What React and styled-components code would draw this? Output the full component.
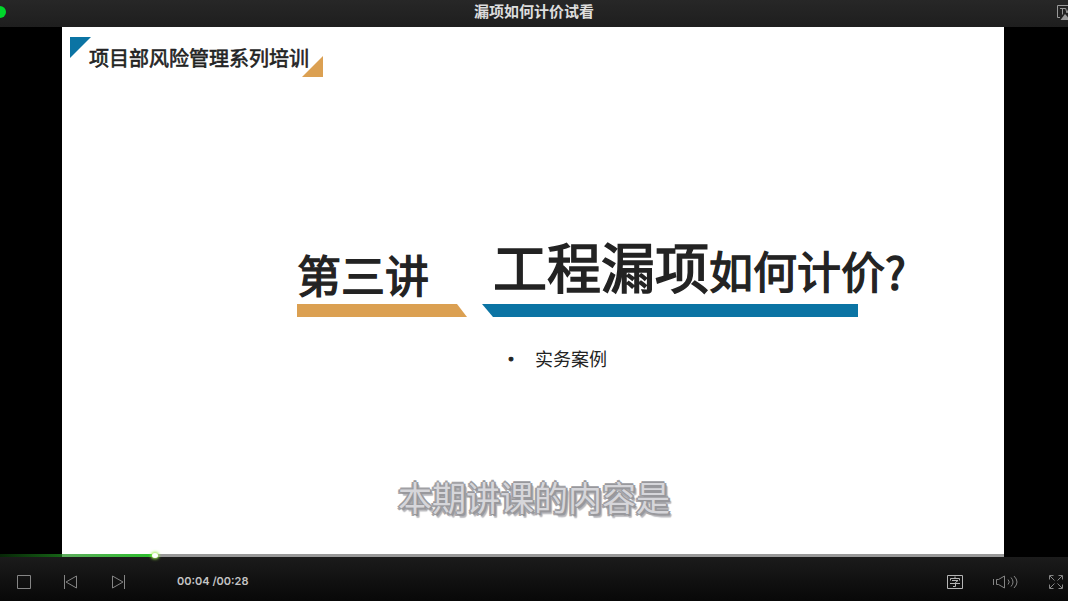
import { useState } from "react";
import styled, { createGlobalStyle } from "styled-components";

const DURATION = 28;

const formatTime = (s) => `00:${String(s).padStart(2, "0")}`;

const App = () => {
  const [time, setTime] = useState(4);

  return (
    <Player>
      <GlobalStyle />
      <TitleBar>
        <WindowDot aria-label="最大化" />
        <h1>漏项如何计价试看</h1>
        <AirPlayButton aria-label="投屏">
          <svg width="18" height="16" viewBox="0 0 18 16">
            <path d="M4 13.5H1.5V1.5h15v12H14" fill="none" stroke="#999" />
            <path d="M4 4.5h5M6.500 4.500v6M9.500 4l1.500 5 2-5" fill="none" stroke="#999" />
            <path d="M9 10 14.500 16h-10z" fill="#999" />
          </svg>
        </AirPlayButton>
      </TitleBar>
      <Stage>
        <Slide>
          <Series>
            <Corner $color="#0b74a4" $shape="0 0, 100% 0, 0 100%" />
            <span>项目部风险管理系列培训</span>
            <Corner $color="#dba052" $shape="100% 0, 100% 100%, 0 100%" $end />
          </Series>
          <Heading>
            <Part $color="#dba052" $bar="0 0, calc(100% - 10px) 0, 100% 100%, 0 100%">
              <Small>第三讲</Small>
            </Part>
            <Part $color="#0b74a4" $bar="0 0, 100% 0, 100% 100%, 11px 100%" $raised>
              <Large>工程漏项</Large>
              <Small>如何计价?</Small>
            </Part>
          </Heading>
          <Topics>
            <li>实务案例</li>
          </Topics>
        </Slide>
        <Caption>本期讲课的内容是</Caption>
        <Seek
          type="range"
          aria-label="播放进度"
          min="0"
          max={DURATION}
          value={time}
          onChange={(e) => setTime(Number(e.target.value))}
          style={{ "--played": `${(time / DURATION) * 100}%` }}
        />
      </Stage>
      <Controls>
        <Group $gap="31px">
          <IconButton aria-label="停止">
            <svg width="16" height="16" viewBox="0 0 16 16">
              <path d="M1.500 1.500h13v13h-13z" />
            </svg>
          </IconButton>
          <IconButton aria-label="上一个">
            <svg width="16" height="16" viewBox="0 0 16 16">
              <path d="M1.500 1v14M13.500 2v12L3 8z" />
            </svg>
          </IconButton>
          <IconButton aria-label="下一个">
            <svg width="16" height="16" viewBox="0 0 16 16">
              <path d="M14.500 1v14M2.500 2v12L13 8z" />
            </svg>
          </IconButton>
        </Group>
        <Time>
          {formatTime(time)} /{formatTime(DURATION)}
        </Time>
        <Group $gap="28px">
          <IconButton aria-label="字幕" $bright>
            <svg width="18" height="16" viewBox="0 0 18 16">
              <path d="M1.500 1.500h15v13h-15z" />
              <path d="M9 2.500v2M4.500 6.500v-2h9v2M6 6.500h6L9.500 8.500v4H7M4 9.500h10" />
            </svg>
          </IconButton>
          <IconButton aria-label="音量">
            <svg width="28" height="16" viewBox="0 0 28 16">
              <path d="M1.500 5v6M4.500 5.500v5h2l6 3.500V2l-6 3.500z" />
              <path d="M16 5.500q2.500 2.500 0 5M19 3.500q4 4.500 0 9M22 2q6 6 0 12" />
            </svg>
          </IconButton>
          <IconButton aria-label="全屏">
            <svg width="16" height="16" viewBox="0 0 16 16">
              <path d="M1.500 5.500v-4h4M10.500 1.500h4v4M14.500 10.500v4h-4M5.500 14.500h-4v-4" />
              <path d="M2 2l4.500 4.500M14 2 9.500 6.500M14 14 9.500 9.500M2 14l4.500-4.500" />
            </svg>
          </IconButton>
        </Group>
      </Controls>
    </Player>
  );
};

const GlobalStyle = createGlobalStyle`
  * {
    box-sizing: border-box;
  }
  body {
    margin: 0;
    background: #000;
    font-family: "Noto Sans CJK SC", sans-serif;
  }
  button {
    padding: 0;
    border: 0;
    background: none;
    cursor: pointer;
  }
  svg {
    display: block;
  }
`;

const Player = styled.main`
  display: flex;
  flex-direction: column;
  height: 100vh;
  overflow: hidden;
`;

const TitleBar = styled.header`
  display: grid;
  grid-template-columns: 1fr auto 1fr;
  align-items: center;
  height: 27px;
  padding-bottom: 3px;
  background: linear-gradient(#272727, #1e1e1e);
  h1 {
    margin: 0;
    padding-bottom: 2px;
    font-size: 15px;
    line-height: 22px;
    font-weight: 700;
    color: #ddd;
  }
`;

const WindowDot = styled.button`
  width: 12px;
  height: 12px;
  margin-left: -6px;
  border-radius: 50%;
  && {
    background: #00d62b;
  }
`;

const AirPlayButton = styled.button`
  justify-self: end;
  margin-right: -6px;
`;

const Stage = styled.section`
  position: relative;
  display: flex;
  flex: 1;
  min-height: 0;
  padding: 0 64px 0 62px;
`;

const Slide = styled.article`
  flex: 1;
  padding: 10px 8px;
  background: #fff;
  color: #232323;
`;

const Series = styled.div`
  display: flex;
  height: 40px;
  span {
    margin: 0 -7px 0 -2px;
    font-size: 20px;
    line-height: 42px;
    white-space: nowrap;
    -webkit-text-stroke: 0.03em;
  }
`;

const Corner = styled.i`
  width: 21px;
  height: 21px;
  align-self: ${({ $end }) => ($end ? "flex-end" : "flex-start")};
  background: ${({ $color }) => $color};
  clip-path: polygon(${({ $shape }) => $shape});
`;

const Heading = styled.h2`
  display: grid;
  grid-template-columns: 170px 376px;
  align-items: end;
  gap: 15px;
  margin: 157px 0 0 227px;
  font-weight: 400;
`;

const Part = styled.div`
  white-space: nowrap;
  line-height: 64px;
  padding-left: ${({ $raised }) => ($raised ? "11px" : "0")};
  &::after {
    content: "";
    display: block;
    height: 13px;
    margin-top: ${({ $raised }) => ($raised ? "-7px" : "-11px")};
    margin-left: ${({ $raised }) => ($raised ? "-11px" : "0")};
    background: ${({ $color }) => $color};
    clip-path: polygon(${({ $bar }) => $bar});
  }
`;

const Small = styled.span`
  font-size: 44px;
  -webkit-text-stroke: 0.03em;
`;

const Large = styled(Small)`
  font-size: 54px;
`;

const Topics = styled.ul`
  margin: 27px 0 0 465px;
  padding: 0;
  font-size: 18px;
  line-height: 28px;
  list-style: none;
  li::before {
    content: "•";
    display: inline-block;
    width: 33px;
    margin-left: -33px;
    -webkit-text-stroke: 1px;
  }
`;

const Caption = styled.p`
  position: absolute;
  right: 0;
  bottom: 34px;
  left: 0;
  margin: 0;
  font-size: 34px;
  line-height: 52px;
  text-align: center;
  color: #d6d6da;
  text-shadow:
    1px 0 #98989c,
    -1px 0 #98989c,
    0 1px #98989c,
    0 -1px #98989c,
    1px 1px #98989c,
    2px 2px #98989c,
    -2px 0 #a8a8ac,
    2px 0 #a8a8ac,
    0 -2px #a8a8ac,
    -2px 2px #a8a8ac,
    3px 3px 1px #b4b4b8,
    3px 4px 1px #c4c4c8;
`;

const Seek = styled.input`
  position: absolute;
  bottom: 0;
  left: 0;
  width: 100%;
  height: 3px;
  margin: 0;
  appearance: none;
  cursor: pointer;
  background:
    linear-gradient(90deg, rgba(34, 190, 34, 0.2), #2cbe2c) 0 0 /
      var(--played) 100% no-repeat,
    rgba(0, 0, 0, 0.4);
  &::-webkit-slider-thumb {
    appearance: none;
    width: 6px;
    height: 5px;
    border-radius: 50%;
    background: #fff;
    box-shadow: 0 0 3px 1px #9cf04c;
  }
`;

const Controls = styled.footer`
  display: flex;
  align-items: center;
  height: 44px;
  padding: 5px 4px 0 16px;
  background: linear-gradient(#1b1b1b, #080808);
`;

const Group = styled.div`
  display: flex;
  gap: ${({ $gap }) => $gap};
`;

const IconButton = styled.button`
  svg {
    fill: none;
    stroke: ${({ $bright }) => ($bright ? "#b5b5b5" : "#858585")};
  }
`;

const Time = styled.time`
  flex: 1;
  margin-left: 51px;
  padding-bottom: 2px;
  font-family: Inter, "Liberation Sans", sans-serif;
  font-size: 11px;
  font-weight: 600;
  color: #c4c4c4;
`;

export default App;
